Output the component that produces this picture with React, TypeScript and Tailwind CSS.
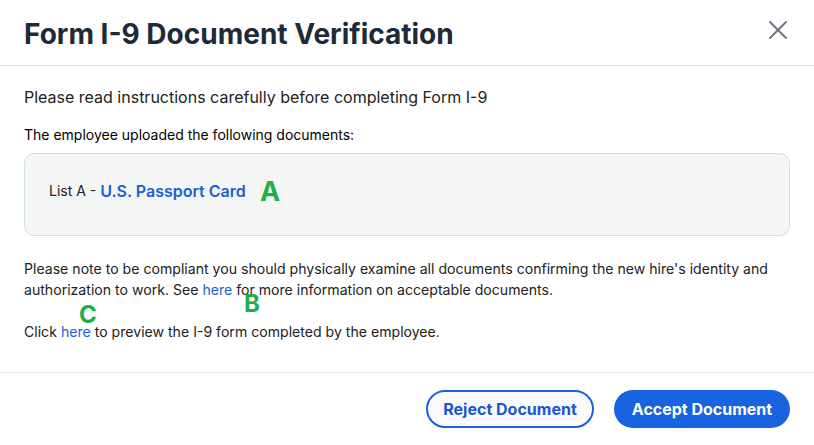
import { X } from "lucide-react";

const mark = "absolute font-bold text-[#22ad4b] leading-none";

export default function App() {
  return (
    <div className="relative flex h-[445px] w-[814px] flex-col bg-white font-['Inter',sans-serif] text-[#1f2937]">
      <div className="flex h-[66px] items-center justify-between border-b border-[#d3dee6] pl-6 pr-6">
        <h1 className="pt-[3px] text-[28px] font-bold text-[#1e2a38]">Form I-9 Document Verification</h1>
        <button aria-label="Close" className="-mr-1 mt-[-6px] text-[#6b7480]">
          <X className="h-8 w-8" strokeWidth={1.4} />
        </button>
      </div>

      <div className="flex flex-1 flex-col px-6 pt-[19px]">
        <p className="text-base text-[#222]">Please read instructions carefully before completing Form I-9</p>
        <p className="mt-4 text-sm text-black">The employee uploaded the following documents:</p>
        <div className="mt-2 flex h-[83px] items-center rounded-[10px] border border-[#cfdde6] bg-[#f4f5f5] px-6 pb-[8px]">
          <span className="text-sm text-[#222]">List A - </span>
          <span className="ml-1 text-base font-semibold text-[#1960d8]">U.S. Passport Card</span>
        </div>
        <p className="mt-[22px] text-[14.1px] leading-[21px] text-[#222]">
          Please note to be compliant you should physically examine all documents confirming the new hire's identity and
          authorization to work. See <a className="text-[#1a5fd9]">here</a> for more information on acceptable documents.
        </p>
        <p className="mt-[21px] text-[14.1px] text-[#222]">
          Click <a className="text-[#1a5fd9]">here</a> to preview the I-9 form completed by the employee.
        </p>
      </div>

      <div className="flex h-[73px] items-center justify-end gap-5 border-t border-[#e3e3e3] pr-6">
        <button className="ml-[-2px] h-[38px] w-[168px] rounded-full border-2 border-[#1a62dd] bg-[#fafafa] text-base font-bold text-[#1a56cf]">
          Reject Document
        </button>
        <button className="h-[38px] w-[176px] rounded-full bg-[#1763e0] text-base font-bold text-white">
          Accept Document
        </button>
      </div>

      <span className={`${mark} left-[260px] top-[178px] text-[27px]`}>A</span>
      <span className={`${mark} left-[244px] top-[292px] text-[24px]`}>B</span>
      <span className={`${mark} left-[79px] top-[303px] text-[24px]`}>C</span>
    </div>
  );
}
